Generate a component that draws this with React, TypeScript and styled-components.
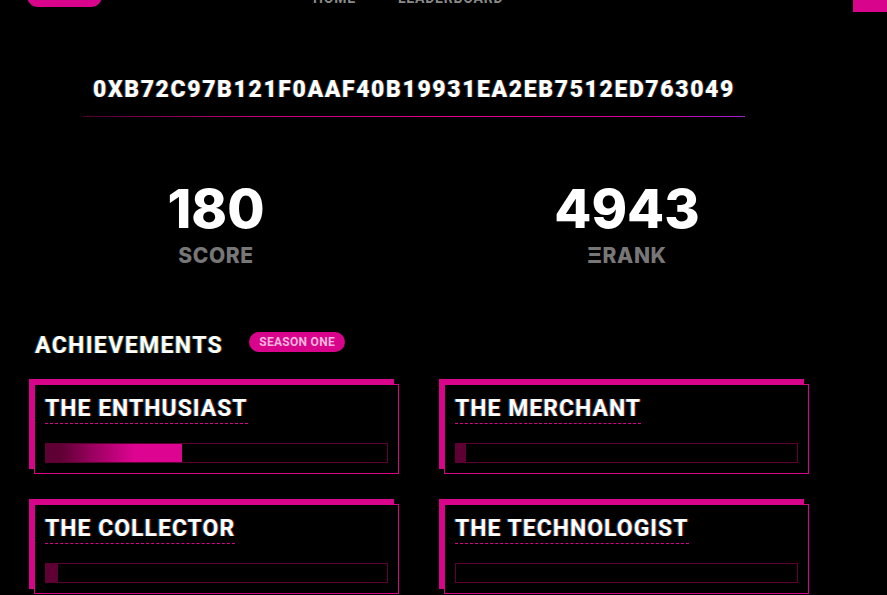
import React from "react";
import styled, { createGlobalStyle } from "styled-components";

const PINK = "#d9048c";
const DARK_PINK = "#5e0034";

const GlobalStyle = createGlobalStyle`
  html, body {
    margin: 0;
    padding: 0;
    background: #000;
    overflow: hidden;
  }
  body {
    font-family: Roboto, "Liberation Sans", sans-serif;
    color: #fff;
  }
`;

type Achievement = {
  name: string;
  progress: number;
};

const achievements: Achievement[] = [
  { name: "THE ENTHUSIAST", progress: 40 },
  { name: "THE MERCHANT", progress: 3 },
  { name: "THE COLLECTOR", progress: 3.6 },
  { name: "THE TECHNOLOGIST", progress: 0 }
];

export default function App() {
  return (
    <Page>
      <GlobalStyle />
      <Header>
        <SeasonPill>SEASON 1</SeasonPill>
        <Nav>
          <NavLink>HOME</NavLink>
          <NavLink>LEADERBOARD</NavLink>
        </Nav>
        <ConnectButton />
      </Header>

      <AddressWrap>
        <Address>0XB72C97B121F0AAF40B19931EA2EB7512ED763049</Address>
      </AddressWrap>

      <Stats>
        <Stat>
          <StatValue>180</StatValue>
          <StatLabel>SCORE</StatLabel>
        </Stat>
        <Stat>
          <StatValue>4943</StatValue>
          <StatLabel>ΞRANK</StatLabel>
        </Stat>
      </Stats>

      <SectionHeader>
        <SectionTitle>ACHIEVEMENTS</SectionTitle>
        <SeasonBadge>SEASON ONE</SeasonBadge>
      </SectionHeader>

      <CardGrid>
        {achievements.map((a) => (
          <Card key={a.name}>
            <CardTitle>
              <span>{a.name}</span>
            </CardTitle>
            <Track>
              <Fill style={{ width: `${a.progress}%` }} />
            </Track>
          </Card>
        ))}
      </CardGrid>
    </Page>
  );
}

const Page = styled.div`
  width: 887px;
  min-height: 595px;
  background: #000;
`;

const Header = styled.header`
  display: flex;
  align-items: flex-start;
  height: 50px;
  margin-top: -38px;
  padding-left: 27px;
`;

const SeasonPill = styled.div`
  margin-top: 23px;
  height: 22px;
  width: 75px;
  border-radius: 11px;
  background: ${PINK};
  color: #fff;
  font-size: 11px;
  font-weight: 700;
  display: flex;
  align-items: center;
  justify-content: center;
`;

const Nav = styled.nav`
  display: flex;
  gap: 42px;
  margin-left: 211px;
  margin-top: 28px;
`;

const NavLink = styled.span`
  color: #8a8a8a;
  font-size: 14px;
  font-weight: 700;
  letter-spacing: 0.8px;
`;

const ConnectButton = styled.div`
  margin-left: auto;
  width: 34px;
  height: 50px;
  background: ${PINK};
`;

const AddressWrap = styled.div`
  margin: 64px 0 0 83px;
  width: 662px;
  padding-bottom: 12px;
  border-bottom: 1px solid transparent;
  border-image: linear-gradient(
      90deg,
      #4e002c 0%,
      #c0007a 25%,
      #e0008c 55%,
      #d4009c 85%,
      #9a20d0 100%
    )
    1;
`;

const Address = styled.div`
  text-align: center;
  font-size: 23px;
  line-height: 1.2;
  font-weight: 900;
  letter-spacing: 1.6px;
  text-shadow: -1px 0 rgba(0, 190, 255, 0.35), 1px 0 rgba(255, 60, 0, 0.35);
`;

const Stats = styled.div`
  display: grid;
  grid-template-columns: 432px 390px;
  margin-top: 65px;
`;

const Stat = styled.div`
  display: flex;
  flex-direction: column;
  align-items: center;
`;

const StatValue = styled.div`
  font-family: Inter, "Noto Sans", sans-serif;
  font-weight: 800;
  font-size: 54px;
  line-height: 1;
`;

const StatLabel = styled.div`
  margin-top: 9px;
  font-family: Inter, "Noto Sans", sans-serif;
  font-weight: 800;
  font-size: 21px;
  line-height: 1;
  letter-spacing: 0.6px;
  color: #777;
`;

const SectionHeader = styled.div`
  display: flex;
  align-items: flex-start;
  gap: 26px;
  margin: 66px 0 0 35px;
`;

const SectionTitle = styled.h2`
  margin: 0;
  font-size: 23px;
  line-height: 1.2;
  font-weight: 700;
  letter-spacing: 1.4px;
  text-shadow: -1px 0 rgba(0, 190, 255, 0.45), 1px 0 rgba(255, 170, 0, 0.45);
`;

const SeasonBadge = styled.span`
  margin-top: 0;
  height: 20px;
  padding: 0 10px;
  border-radius: 10px;
  background: ${PINK};
  color: #f8b4dc;
  font-size: 12px;
  font-weight: 700;
  letter-spacing: 0.3px;
  display: flex;
  align-items: center;
`;

const CardGrid = styled.div`
  display: grid;
  grid-template-columns: 365px 365px;
  column-gap: 45px;
  row-gap: 30px;
  margin: 25px 0 0 34px;
`;

const Card = styled.div`
  box-sizing: border-box;
  height: 90px;
  padding: 10px;
  border: 1px solid ${PINK};
  background: #000;
  box-shadow: -5px -5px 0 0 ${PINK};
`;

const CardTitle = styled.h3`
  margin: 0;
  font-size: 23px;
  line-height: 1.2;
  font-weight: 700;
  letter-spacing: 1px;

  span {
    display: inline-block;
    border-bottom: 1px dashed ${PINK};
    text-shadow: -1px 0 rgba(0, 170, 255, 0.55), 1px 0 rgba(255, 40, 0, 0.55);
  }
`;

const Track = styled.div`
  box-sizing: border-box;
  margin-top: 19px;
  height: 20px;
  border: 1px solid ${DARK_PINK};
  background: #000;
`;

const Fill = styled.div`
  height: 100%;
  background: linear-gradient(
    90deg,
    #5e0034 0px,
    #5e0034 14px,
    #a8006a 55px,
    #dc0490 88px,
    #dc0490 100%
  );
`;
